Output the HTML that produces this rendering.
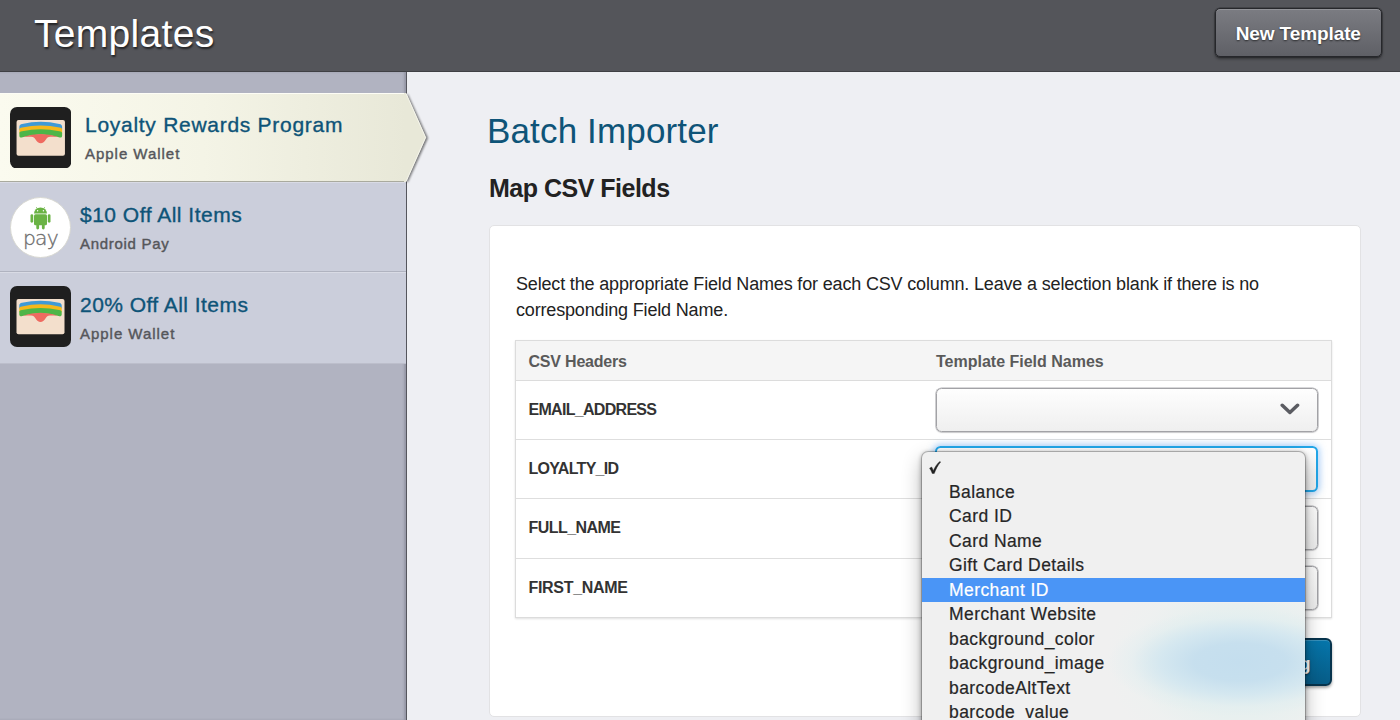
<!DOCTYPE html>
<html lang="en">
<head>
<meta charset="utf-8">
<title>Templates - Batch Importer</title>
<style>
*{box-sizing:border-box;margin:0;padding:0}
html,body{width:1400px;height:720px;overflow:hidden}
body{position:relative;background:#eeeff3;font-family:"Liberation Sans",Arial,sans-serif;color:#222}
.abs{position:absolute}
/* header */
#hdr{left:0;top:0;width:1400px;height:72px;background:#54555a;border-bottom:1px solid #3f4044}
#hdr h1{position:absolute;left:34px;top:11px;font-size:39px;line-height:46px;font-weight:400;color:#fff;text-shadow:1px 2px 2px rgba(0,0,0,.6);letter-spacing:.3px}
#newbtn{left:1215px;top:8px;width:166.500px;height:48.500px;border:1px solid #26272b;border-radius:5px;padding-top:2.800px;letter-spacing:-.1px;background:linear-gradient(#7b7c82,#5f6066);box-shadow:0 2px 3px rgba(0,0,0,.4),0 0 0 .5px rgba(30,30,34,.6),inset 0 1px 0 rgba(255,255,255,.18);color:#fff;font-weight:700;font-size:19px;line-height:44px;text-align:center;text-shadow:0 1px 2px rgba(0,0,0,.6)}
/* sidebar */
#side{left:0;top:72px;width:407px;height:648px;background:#b1b3c1;border-right:1px solid #55565d;box-shadow:inset -2px 0 2px rgba(60,60,75,.22)}
.item{position:absolute;left:0;width:406px;height:90px;background:#cbcedb;border-bottom:1px solid #b0b3c0;border-top:1px solid #d9dbe5}
.item .nm{position:absolute;left:80px;top:18px;font-size:21px;line-height:28px;color:#0e5478;white-space:nowrap;letter-spacing:.5px;-webkit-text-stroke:.35px #0e5478}
.item .sub{position:absolute;left:80px;top:51px;font-size:15px;line-height:20px;color:#55565a;white-space:nowrap;letter-spacing:.7px;-webkit-text-stroke:.4px #55565a}
#sel{left:0;top:92.500px;width:406px;height:89.500px;background:linear-gradient(90deg,#fbfbef 0%,#f4f4e6 50%,#e8e8d8 100%);border-top:1px solid #fdfdf6;border-bottom:1px solid #a9aa9e}
#sel .wallet{top:13.200px;left:9.500px;width:61.500px;height:61.500px}
#sel .nm{left:85px;top:17.500px}
#sel .sub{left:85px;top:50.500px}
/* main */
#title{left:487px;top:108px;font-size:35px;line-height:46px;letter-spacing:.15px;color:#0e5478;white-space:nowrap}
#sub{left:489px;top:172px;font-size:25px;line-height:32px;letter-spacing:-.5px;font-weight:700;color:#222;white-space:nowrap}
#card{left:489px;top:225px;width:872px;height:492px;background:#fff;border:1px solid #e2e2e4;border-radius:5px}
#para{left:516px;top:270.700px;width:770px;font-size:18px;line-height:26px;color:#222;letter-spacing:-.165px}
#tbl{left:515px;top:340px;width:817px;height:278px;border:1px solid #dcdcdc;background:#fff;box-shadow:0 1px 2px rgba(0,0,0,.12)}
.th{position:absolute;left:0;top:0;width:815px;height:40px;background:#f5f5f5;border-bottom:1px solid #dcdcdc}
.th span{position:absolute;top:10.700px;font-size:16px;line-height:20px;font-weight:700;color:#5a5a5a}
.row{position:absolute;left:0;width:815px;height:59px;border-bottom:1px solid #dedede}
.row b{position:absolute;left:12.500px;top:19px;font-size:16px;line-height:20px;color:#333}
.selbox{position:absolute;left:419.500px;top:6.500px;width:382.500px;height:44.800px;border:1px solid #a2a2a6;border-radius:5.500px;background:linear-gradient(#fefefe,#efefef);box-shadow:0 0 0 .6px #b2b2b6,0 1px 1.500px rgba(0,0,0,.1)}

/* arrow on selected item */
#arrow{left:405px;top:93px;width:30px;height:89px;overflow:visible}
/* icons */
.wallet{position:absolute;left:9.800px;top:13.200px;width:61px;height:61px}
.apay{position:absolute;left:9.700px;top:13.800px;width:61px;height:61px}
.apay text{font-family:"DejaVu Sans Light","DejaVu Sans","Liberation Sans",sans-serif}
/* chevron */
.chev{position:absolute;right:17px;top:13.400px;width:19.800px;height:14.600px}
.focus{top:6px !important;left:419px !important;width:383px !important;height:46px !important;border:2px solid #22a6e8 !important;box-shadow:0 0 6px 2px rgba(110,175,250,.5) !important}
/* blue button */
#go{left:1150px;top:637.500px;width:182px;height:48px;border:2px solid #07344d;border-radius:6px;background:linear-gradient(#0676ab,#075c87);box-shadow:0 2px 3px rgba(0,0,0,.35),inset 0 1px 0 rgba(255,255,255,.2);color:#fff;font-weight:700;font-size:19px;line-height:44px;padding-top:2px;text-align:right;padding-right:19.300px;text-shadow:0 1px 2px rgba(0,0,0,.5);white-space:nowrap;overflow:hidden}
/* native dropdown */
#menu{left:922px;top:452px;width:383px;height:280px;background:#f0f0f0;border-radius:6px 6px 0 0;box-shadow:0 0 0 1px rgba(0,0,0,.2),0 1px 4px 1px rgba(0,0,0,.3),0 8px 20px rgba(0,0,0,.3);overflow:hidden}
#menu .gclip{position:absolute;left:0;top:151px;width:383px;height:130px;overflow:hidden}
#menu .glow{position:absolute;left:118px;top:-41px;width:400px;height:200px;background:radial-gradient(ellipse 132px 54px at 50% 50%,rgba(196,222,238,1) 0%,rgba(198,223,238,.98) 35%,rgba(207,229,240,.78) 60%,rgba(221,236,240,.38) 82%,rgba(232,240,239,0) 100%),radial-gradient(ellipse 135px 100px at 50% 50%,rgba(228,240,239,.95) 0%,rgba(231,240,239,.9) 55%,rgba(236,241,240,.5) 80%,rgba(240,240,240,0) 100%)}
#menu ul{list-style:none;position:absolute;left:0;top:3px;width:383px}
#menu li{height:24.5px;line-height:24.500px;padding-left:27px;font-size:17.500px;letter-spacing:.42px;color:#262626;-webkit-text-stroke:.2px currentColor;white-space:nowrap;position:relative}
#menu li.hi{background:#4a95f6;color:#fff}
#menu .ck{position:absolute;left:7px;top:6px;width:12px;height:13px}
</style>
</head>
<body>
<div id="hdr" class="abs"><h1>Templates</h1></div>
<div id="newbtn" class="abs">New Template</div>

<div id="side" class="abs"></div>
<div id="sel" class="abs item"><svg class="wallet" viewBox="0 0 61 61"><rect width="61" height="61" rx="7" fill="#1f1f1f"/><rect x="6.500" y="13" width="48" height="35.300" rx="2" fill="#f3dfcc"/>
<path d="M9.300 22.500 L9.300 19.600 C9.300 17.800 10.300 17.200 12 16.800 Q30.500 12.600 49 16.800 C50.700 17.200 51.700 17.800 51.700 19.600 L51.700 22.500 Q30.500 16 9.300 22.500Z" fill="#3f9ad6"/>
<path d="M9.300 26.300 L9.300 22.200 C9.300 21.200 10 20.800 12 20.400 Q30.500 16.300 49 20.400 C51 20.800 51.700 21.200 51.700 22.200 L51.700 26.300 Q30.500 19.800 9.300 26.300Z" fill="#f6b81a"/>
<path d="M9.300 28.500 L9.300 25.900 C9.300 24.900 10 24.500 12 24.100 Q30.500 20 49 24.100 C51 24.500 51.700 24.900 51.700 25.900 L51.700 28.500 C51.700 30.200 50.300 30.600 48.600 30.100 Q30.500 24.300 12.400 30.100 C10.700 30.600 9.300 30.200 9.300 28.500Z" fill="#4db648"/>
<path d="M13 29.600 Q30.500 24 48 29.600 L40 29.400 C37.500 29.400 36.800 30.300 35.800 32 C34.200 34.800 32.500 36 30.500 36 C28.500 36 26.800 34.800 25.200 32 C24.200 30.300 23.500 29.400 21 29.400Z" fill="#ef6a60"/></svg><span class="nm" style="letter-spacing:.72px">Loyalty Rewards Program</span><span class="sub" style="letter-spacing:.97px">Apple Wallet</span></div>
<div class="item" style="top:182px"><svg class="apay" viewBox="0 0 61 61"><circle cx="30.5" cy="30.5" r="30" fill="#fff" stroke="#d8d8d2" stroke-width="1"/>
<g fill="#6ab344"><path d="M24 16.5a6.5 6 0 0 1 13 0z"/><rect x="24" y="17.3" width="13" height="11" rx="1.5"/><rect x="20.500" y="17.2" width="2.700" height="8.500" rx="1.350"/><rect x="37.800" y="17.2" width="2.700" height="8.500" rx="1.350"/><rect x="26.300" y="26" width="2.800" height="6.500" rx="1.400"/><rect x="31.900" y="26" width="2.800" height="6.500" rx="1.400"/><path d="M26.300 10.100l1.300 2.300M34.700 10.100l-1.300 2.300" stroke="#6ab344" stroke-width=".7" fill="none"/></g>
<circle cx="27.600" cy="13.800" r=".7" fill="#fff"/><circle cx="33.400" cy="13.800" r=".7" fill="#fff"/>
<text x="30.500" y="47.600" text-anchor="middle" font-size="20.300" fill="#6f6f6f" stroke="#6f6f6f" stroke-width=".35" letter-spacing="-.7">pay</text></svg><span class="nm">$10 Off All Items</span><span class="sub">Android Pay</span></div>
<div class="item" style="top:272px;height:91.500px;border-bottom-color:#bcbecb"><svg class="wallet" viewBox="0 0 61 61"><rect width="61" height="61" rx="7" fill="#1f1f1f"/><rect x="6.500" y="13" width="48" height="35.300" rx="2" fill="#f3dfcc"/>
<path d="M9.300 22.500 L9.300 19.600 C9.300 17.800 10.300 17.200 12 16.800 Q30.500 12.600 49 16.800 C50.700 17.200 51.700 17.800 51.700 19.600 L51.700 22.500 Q30.500 16 9.300 22.500Z" fill="#3f9ad6"/>
<path d="M9.300 26.300 L9.300 22.200 C9.300 21.200 10 20.800 12 20.400 Q30.500 16.300 49 20.400 C51 20.800 51.700 21.200 51.700 22.200 L51.700 26.300 Q30.500 19.800 9.300 26.300Z" fill="#f6b81a"/>
<path d="M9.300 28.500 L9.300 25.900 C9.300 24.900 10 24.500 12 24.100 Q30.500 20 49 24.100 C51 24.500 51.700 24.900 51.700 25.900 L51.700 28.500 C51.700 30.200 50.300 30.600 48.600 30.100 Q30.500 24.300 12.400 30.100 C10.700 30.600 9.300 30.200 9.300 28.500Z" fill="#4db648"/>
<path d="M13 29.600 Q30.500 24 48 29.600 L40 29.400 C37.500 29.400 36.800 30.300 35.800 32 C34.200 34.800 32.500 36 30.500 36 C28.500 36 26.800 34.800 25.200 32 C24.200 30.300 23.500 29.400 21 29.400Z" fill="#ef6a60"/></svg><span class="nm" style="letter-spacing:.45px">20% Off All Items</span><span class="sub" style="letter-spacing:.97px">Apple Wallet</span></div>

<svg id="arrow" class="abs" viewBox="0 0 30 89"><defs><filter id="ash" x="-50%" y="-20%" width="220%" height="140%"><feGaussianBlur stdDeviation="1.1"/></filter></defs>
<path d="M0 1 L2 1 L22 44.500 L2 88.500 L0 88.500Z" fill="#000" opacity=".5" filter="url(#ash)" transform="translate(1,0.500)"/>
<path d="M-1 0 L1 0 L21 44.500 L1 89 L-1 89Z" fill="#e8e8d8"/>
<path d="M1 .3 L20.600 44.500 L1 88.700" fill="none" stroke="#f8f8f0" stroke-width="1" opacity=".9"/></svg>
<div id="title" class="abs">Batch Importer</div>
<div id="sub" class="abs">Map CSV Fields</div>
<div id="card" class="abs"></div>
<div id="para" class="abs">Select the appropriate Field Names for each CSV column. Leave a selection blank if there is no corresponding Field Name.</div>
<div id="tbl" class="abs">
  <div class="th"><span style="left:12.500px;letter-spacing:-.2px">CSV Headers</span><span style="left:420px">Template Field Names</span></div>
  <div class="row" style="top:40px"><b style="letter-spacing:-.7px">EMAIL_ADDRESS</b><div class="selbox"><svg class="chev" viewBox="0 0 22 16"><path d="M2.500 3.500 L11 11.500 L19.500 3.500" fill="none" stroke="#5b5c62" stroke-width="3.900" stroke-linecap="round" stroke-linejoin="round"/></svg></div></div>
  <div class="row" style="top:99px"><b style="letter-spacing:-.7px">LOYALTY_ID</b><div class="selbox focus"><svg class="chev" viewBox="0 0 22 16"><path d="M2.500 3.500 L11 11.500 L19.500 3.500" fill="none" stroke="#5b5c62" stroke-width="3.900" stroke-linecap="round" stroke-linejoin="round"/></svg></div></div>
  <div class="row" style="top:158px;height:60px"><b style="letter-spacing:-.55px">FULL_NAME</b><div class="selbox"><svg class="chev" viewBox="0 0 22 16"><path d="M2.500 3.500 L11 11.500 L19.500 3.500" fill="none" stroke="#5b5c62" stroke-width="3.900" stroke-linecap="round" stroke-linejoin="round"/></svg></div></div>
  <div class="row" style="top:218px;height:58px;border-bottom:0"><b style="letter-spacing:-.3px">FIRST_NAME</b><div class="selbox"><svg class="chev" viewBox="0 0 22 16"><path d="M2.500 3.500 L11 11.500 L19.500 3.500" fill="none" stroke="#5b5c62" stroke-width="3.900" stroke-linecap="round" stroke-linejoin="round"/></svg></div></div>
</div>
<div id="go" class="abs">Start Importing</div>
<div id="menu" class="abs"><div class="gclip"><div class="glow"></div></div><ul>
<li><svg class="ck" viewBox="0 0 12 13"><path d="M.6 7.200 L2.700 6 C3.400 7.300 3.900 8.600 4.300 9.800 C5.800 6.200 8 2.800 10.800 .4 L11.600 1 C8.800 4.300 6.800 8.200 5.200 12.600 L3.300 12.600 C2.700 10.700 1.800 8.900 .6 7.200Z" fill="#222" stroke="#222" stroke-width=".45" stroke-linejoin="round"/></svg>&nbsp;</li>
<li>Balance</li>
<li>Card ID</li>
<li>Card Name</li>
<li>Gift Card Details</li>
<li class="hi">Merchant ID</li>
<li>Merchant Website</li>
<li>background_color</li>
<li>background_image</li>
<li>barcodeAltText</li>
<li>barcode_value</li>
</ul></div>
</body>
</html>
